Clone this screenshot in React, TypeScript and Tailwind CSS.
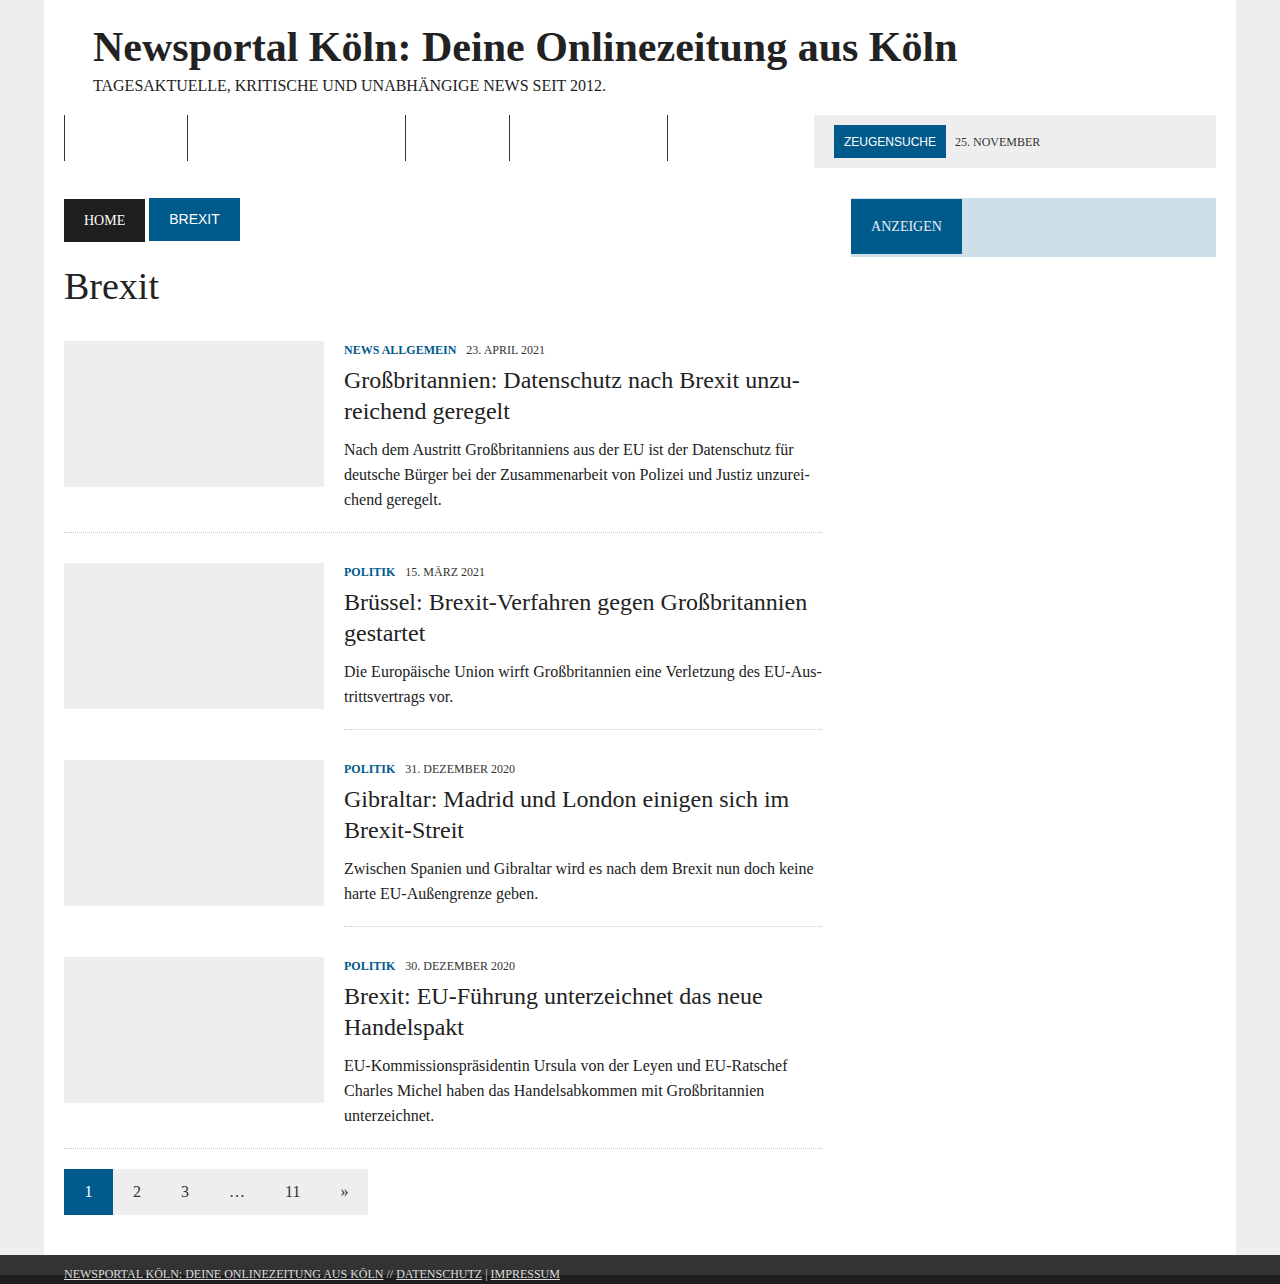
import React from 'react';

type Article = {
  category: string;
  date: string;
  title: string;
  excerpt: string;
  indentRule?: boolean;
};

const articles: Article[] = [
  {
    category: 'News Allgemein',
    date: '23. April 2021',
    title: 'Großbritannien: Datenschutz nach Brexit unzu\u00ADreichend geregelt',
    excerpt:
      'Nach dem Austritt Großbritanniens aus der EU ist der Datenschutz für deutsche Bürger bei der Zusammenarbeit von Polizei und Justiz unzurei\u00ADchend geregelt.',
  },
  {
    category: 'Politik',
    date: '15. März 2021',
    title: 'Brüssel: Brexit-Verfahren gegen Großbritannien gestartet',
    excerpt: 'Die Europäische Union wirft Großbritannien eine Verletzung des EU-Aus\u00ADtrittsvertrags vor.',
    indentRule: true,
  },
  {
    category: 'Politik',
    date: '31. Dezember 2020',
    title: 'Gibraltar: Madrid und London einigen sich im Brexit-Streit',
    excerpt: 'Zwischen Spanien und Gibraltar wird es nach dem Brexit nun doch keine harte EU-Außengrenze geben.',
    indentRule: true,
  },
  {
    category: 'Politik',
    date: '30. Dezember 2020',
    title: 'Brexit: EU-Führung unterzeichnet das neue Handelspakt',
    excerpt:
      'EU-Kommissionspräsidentin Ursula von der Leyen und EU-Ratschef Charles Michel haben das Handelsabkommen mit Großbritannien unterzeichnet.',
  },
];

const navWidths = ['w-[123px]', 'w-[218px]', 'w-[104px]', 'w-[158px]', 'w-[100px]'];

const ArticleRow: React.FC<{ article: Article; last: boolean }> = ({ article, last }) => {
  const rule = 'border-b border-dotted border-[#c8c8c8]';
  return (
    <article className={`flex gap-5 ${article.indentRule ? '' : rule} ${last ? 'mb-5' : 'mb-[30px]'}`}>
      <div className="w-[260px] shrink-0 pb-[19px]">
        <div className="h-[146px] bg-[#eeeeee]" />
      </div>
      <div className={`flex-1 min-w-0 pb-5 ${article.indentRule ? rule : ''}`}>
        <div className="flex items-center gap-[10px] text-[12px] leading-[18px] uppercase">
          <span className="font-bold text-[#005a8c]">{article.category}</span>
          <span className="text-[#333]">{article.date}</span>
        </div>
        <h2 className="mt-[6px] text-[24px] leading-[31px] text-[#222]">{article.title}</h2>
        <p className="mt-[10px] text-[16px] leading-[25px] text-[#222]">{article.excerpt}</p>
      </div>
    </article>
  );
};

export default function App() {
  return (
    <div className="min-h-screen bg-[#eeeeee] font-['Liberation_Serif',_'Times_New_Roman',_serif] text-[#222]">
      <div className="mx-auto w-[1192px] bg-white px-5 pb-10">
        {/* Header */}
        <header className="px-[29px] pt-[22px]">
          <h1 className="text-[42px] font-bold leading-[50px] text-[#222]">
            Newsportal Köln: Deine Onlinezeitung aus Köln
          </h1>
          <p className="mt-[4px] text-[16px] leading-[20px] uppercase text-[#222]">
            Tagesaktuelle, kritische und unabhängige News seit 2012.
          </p>
        </header>

        {/* Navigation */}
        <nav className="mt-[19px] flex items-start">
          <div className="flex">
            {navWidths.map((w, i) => (
              <div key={i} className={`h-[46px] border-l border-[#333] ${w}`} />
            ))}
          </div>
          <div className="ml-auto flex h-[53px] w-[402px] items-start bg-[#eeeeee] pl-5 pt-[10px]">
            <span className="flex h-[33px] items-center bg-[#005a8c] px-[10px] font-['Liberation_Sans',_Arial,_sans-serif] text-[12px] text-white">
              ZEUGENSUCHE
            </span>
            <span className="ml-[9px] flex h-[33px] items-center text-[12px] uppercase text-[#333]">
              25. November
            </span>
          </div>
        </nav>

        {/* Body */}
        <div className="mt-[30px] flex gap-[29px]">
          <main className="w-[758px] shrink-0">
            <div className="flex items-start gap-1">
              <span className="mt-px flex h-[43px] items-center bg-[#1e1e1e] px-5 text-[14px] uppercase text-white">
                Home
              </span>
              <span className="flex h-[43px] items-center bg-[#005a8c] px-5 font-['Liberation_Sans',_Arial,_sans-serif] text-[14px] uppercase text-white">
                Brexit
              </span>
            </div>

            <h1 className="mt-[21px] text-[38px] leading-[46px] text-[#222]">Brexit</h1>

            <div className="mt-[32px]">
              {articles.map((a, i) => (
                <ArticleRow key={i} article={a} last={i === articles.length - 1} />
              ))}
            </div>

            {/* Pagination */}
            <div className="flex w-fit bg-[#eeeeee] text-[16px]">
              <span className="flex h-[46px] w-[49px] items-center justify-center bg-[#005a8c] text-white">1</span>
              <span className="flex h-[46px] items-center px-5 text-[#333]">2</span>
              <span className="flex h-[46px] items-center px-5 text-[#333]">3</span>
              <span className="flex h-[46px] items-center px-5 text-[#333]">…</span>
              <span className="flex h-[46px] items-center px-5 text-[#333]">11</span>
              <span className="flex h-[46px] items-center px-5 text-[#333]">»</span>
            </div>
          </main>

          <aside className="w-[365px] shrink-0">
            <div className="bg-[#cddfe8] pb-[3px] pt-px">
              <div className="flex h-[55px] w-[111px] items-center justify-center bg-[#005a8c] text-[14px] uppercase text-[#e8eef2]">
                Anzeigen
              </div>
            </div>
          </aside>
        </div>
      </div>

      {/* Footer */}
      <footer className="bg-[linear-gradient(#333333_0,#333333_20px,#1e1e1e_20px)] pb-10 pt-[10px]">
        <div className="mx-auto w-[1192px] px-5 text-[12px] leading-[18px] uppercase text-[#ddd]">
          <a className="underline">Newsportal Köln: Deine Onlinezeitung aus Köln</a>
          <span> // </span>
          <a className="underline">Datenschutz</a>
          <span> | </span>
          <a className="underline">Impressum</a>
        </div>
      </footer>
    </div>
  );
}
